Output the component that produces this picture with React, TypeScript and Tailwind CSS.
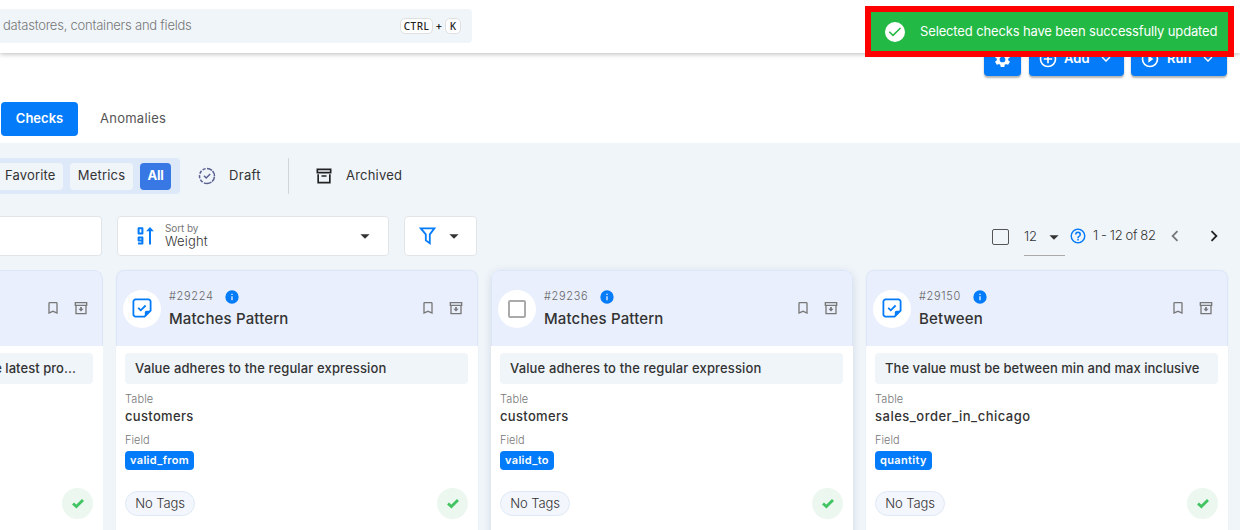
import type { ReactNode } from "react";

type IconProps = { d: string; className?: string };

function Icon({ d, className = "size-6" }: IconProps) {
  return (
    <svg viewBox="0 0 24 24" fill="currentColor" className={`shrink-0 ${className}`}>
      <path d={d} />
    </svg>
  );
}

const BOOKMARK = "M17 18L12 15.82L7 18V5H17M17 3H7A2 2 0 0 0 5 5V21L12 18L19 21V5C19 3.89 18.1 3 17 3Z";
const ARCHIVE =
  "M20 21H4V10H6V19H18V10H20V21M3 3H21V9H3V3M9.5 11H14.5C14.78 11 15 11.22 15 11.5V13H9V11.5C9 11.22 9.22 11 9.5 11M5 5V7H19V5H5Z";
const ARCHIVE_DOWN = "M20.5 21.5H3.5V9H5.5V19.5H18.5V9H20.5V21.5M2.5 3H21.5V9H2.5V3M4.5 5V7H19.5V5H4.5ZM10.7 10.5V13H8L12 17.4L16 13H13.3V10.5Z";
const MENU_DOWN = "M7 10L12 15L17 10H7Z";
const CHEVRON_DOWN = "M7.41 8.58L12 13.17L16.59 8.58L18 10L12 16L6 10L7.41 8.58Z";
const CHEVRON_LEFT = "M15.41 16.58L10.83 12L15.41 7.41L14 6L8 12L14 18L15.41 16.58Z";
const CHEVRON_RIGHT = "M8.59 16.58L13.17 12L8.59 7.41L10 6L16 12L10 18L8.59 16.58Z";
const COG =
  "M19.14 12.94c.04-.3.06-.61.06-.94 0-.32-.02-.64-.07-.94l2.03-1.58a.49.49 0 0 0 .12-.61l-1.92-3.32a.488.488 0 0 0-.59-.22l-2.39.96c-.5-.38-1.03-.7-1.62-.94l-.36-2.54a.484.484 0 0 0-.48-.41h-3.84c-.24 0-.43.17-.47.41l-.36 2.54c-.59.24-1.13.57-1.62.94l-2.39-.96c-.22-.08-.47 0-.59.22L2.74 8.87c-.12.21-.08.47.12.61l2.03 1.58c-.05.3-.09.63-.09.94s.02.64.07.94l-2.03 1.58a.49.49 0 0 0-.12.61l1.92 3.32c.12.22.37.29.59.22l2.39-.96c.5.38 1.03.7 1.62.94l.36 2.54c.05.24.24.41.48.41h3.84c.24 0 .44-.17.47-.41l.36-2.54c.59-.24 1.13-.56 1.62-.94l2.39.96c.22.08.47 0 .59-.22l1.92-3.32c.12-.22.07-.47-.12-.61l-2.01-1.58zM12 15.6A3.6 3.6 0 1 1 12 8.4a3.6 3.6 0 0 1 0 7.2z";
const INFO = "M13 9H11V7H13M13 17H11V11H13M12 2A10 10 0 1 0 12 22A10 10 0 0 0 12 2Z";
const PLUS_CIRCLE =
  "M12 20C7.59 20 4 16.41 4 12S7.59 4 12 4 20 7.59 20 12 16.41 20 12 20M12 2A10 10 0 1 0 12 22A10 10 0 0 0 12 2M13 7H11V11H7V13H11V17H13V13H17V11H13V7Z";
const PLAY_CIRCLE =
  "M12 20C7.59 20 4 16.41 4 12S7.59 4 12 4 20 7.59 20 12 16.41 20 12 20M12 2A10 10 0 1 0 12 22A10 10 0 0 0 12 2M10 16.5L16 12L10 7.5V16.5Z";
const HELP =
  "M11 18H13V16H11V18M12 2A10 10 0 1 0 12 22A10 10 0 0 0 12 2M12 20C7.59 20 4 16.41 4 12S7.59 4 12 4 20 7.59 20 12 16.41 20 12 20M12 6A4 4 0 0 0 8 10H10A2 2 0 0 1 14 10C14 12 11 11.75 11 15H13C13 12.75 16 12.5 16 10A4 4 0 0 0 12 6Z";

function Header() {
  return (
    <header className="relative z-10 flex h-[53px] shrink-0 bg-white shadow-[0_1px_5px_rgba(0,0,0,0.28)]">
      <div className="mt-[9px] flex h-[34px] w-[472px] items-center rounded-r bg-[#f0f5fa] pr-[11px]">
        <span className="ml-[3px] flex-1 text-[13px] font-light tracking-[-0.23px] whitespace-nowrap text-[#777]">
          datastores, containers and fields
        </span>
        <span className="flex h-4 w-[33px] items-center justify-center rounded-[5px] border border-[#e0e0e0] bg-white font-['Noto_Sans',sans-serif] text-[10px] font-medium tracking-[0.5px] text-[#222]">
          CTRL
        </span>
        <span className="w-3 text-center text-[11px]">+</span>
        <span className="flex h-4 w-4 items-center justify-center rounded-[5px] border border-[#e0e0e0] bg-white font-['Noto_Sans',sans-serif] text-[10px] font-medium text-[#222]">
          K
        </span>
      </div>
    </header>
  );
}

function Actions() {
  const button = "flex h-9 items-center rounded bg-[#047bf8] pt-0.5 text-[13px] font-semibold text-white shadow-[0_2px_2px_rgba(0,0,0,0.3)]";
  return (
    <div className="flex justify-end gap-2 pr-[13px]">
      <div className={`${button} w-[37px] justify-center`}>
        <Icon d={COG} className="size-[19px]" />
      </div>
      <div className={`${button} w-[95px] pl-[9px]`}>
        <Icon d={PLUS_CIRCLE} className="size-5" />
        <span className="ml-[6px] w-[27px] tracking-[0.1px]">Add</span>
        <Icon d={CHEVRON_DOWN} className="ml-[6px] size-[18px]" />
      </div>
      <div className={`${button} -ml-px w-24 pl-[9px]`}>
        <Icon d={PLAY_CIRCLE} className="size-5" />
        <span className="ml-[7px] w-[27px]">Run</span>
        <Icon d={CHEVRON_DOWN} className="ml-[5px] size-[18px]" />
      </div>
    </div>
  );
}

function Filters() {
  return (
    <div className="flex h-9 items-center text-[13px] text-[#333]">
      <div className="flex h-9 w-[180px] shrink-0 items-center rounded-r bg-[#dde8f8]">
        <span className="flex h-[27px] w-[63px] items-center rounded-r bg-[#f0f5fa] pl-[5px] tracking-[0.15px]">Favorite</span>
        <span className="ml-[7px] flex h-[27px] w-[63px] items-center justify-center rounded bg-[#f0f5fa] tracking-[0.2px]">Metrics</span>
        <span className="ml-[7px] flex h-[27px] w-[31px] items-center justify-center rounded bg-[#3778e4] font-bold tracking-[-0.3px] text-white">All</span>
      </div>
      <svg viewBox="0 0 18 18" fill="none" stroke="#5b6090" strokeWidth="1.5" className="ml-[18px] size-[18px]">
        <path d="M9 1.5A7.5 7.5 0 0 1 9 16.5" strokeDasharray="5.4 0.8" />
        <path d="M9 16.5A7.5 7.5 0 0 1 9 1.5" strokeDasharray="3.2 1.5" />
        <path d="M6 8.8L8.2 11L12.2 7" />
      </svg>
      <span className="ml-[13px] w-[59px] tracking-[0.3px]">Draft</span>
      <span className="h-9 w-px bg-[#d0d5da]" />
      <Icon d={ARCHIVE} className="ml-[25px] size-5 text-[#222]" />
      <span className="ml-3 tracking-[0.2px]">Archived</span>
    </div>
  );
}

function Toolbar() {
  const field = "flex h-10 items-center border border-[#e1e5e8] bg-white";
  return (
    <div className="mt-[22px] flex h-10 items-center text-[#333]">
      <div className={`${field} w-[102px] rounded-r border-l-0`} />
      <div className={`${field} ml-[15px] w-[272px] rounded pr-[12px] pl-[19px]`}>
        <svg viewBox="0 0 17 18" fill="none" stroke="#047bf8" className="h-[18px] w-[17px]">
          <path d="M1.6 1.2H5.4V6.6H1.6Z" strokeWidth="2" strokeLinejoin="round" />
          <path d="M5.4 13.4H1.6V10.4H5.4V16.6H1" strokeWidth="2" strokeLinejoin="round" />
          <path d="M13 17.5V2" strokeWidth="2" />
          <path d="M9.2 4.2L13 0L16.8 4.2Z" fill="#047bf8" stroke="none" />
        </svg>
        <div className="ml-[11px] flex flex-1 flex-col">
          <span className="text-[10px] leading-[11px] tracking-[-0.1px] text-[#777]">Sort by</span>
          <span className="text-[13px] leading-[15px] font-light tracking-[0.15px]">Weight</span>
        </div>
        <Icon d={MENU_DOWN} className="size-[22px]" />
      </div>
      <div className={`${field} ml-[15px] w-[73px] rounded pl-[14px]`}>
        <svg viewBox="0 0 18 18" fill="none" stroke="#047bf8" strokeWidth="1.8" className="size-[18px]">
          <path d="M1.8 1.4H15.4L10.8 7.4V16.2L6.8 13.4V7.4Z" />
        </svg>
        <Icon d={MENU_DOWN} className="ml-[6px] size-[22px]" />
      </div>
      <div className="ml-auto flex h-10 items-center pr-[15px]">
        <span className="mt-0.5 h-4 w-[17px] rounded-[2px] border border-[#555]" />
        <div className="mt-[2px] ml-[15px] flex h-[37px] w-[41px] items-center border-b border-[#aaa]">
          <span className="flex-1 text-[13px] font-light">12</span>
          <Icon d={MENU_DOWN} className="size-[22px]" />
        </div>
        <Icon d={HELP} className="ml-1 size-[18px] text-[#047bf8]" />
        <span className="ml-[6px] w-[65px] text-[13px] font-light tracking-[-0.36px] whitespace-nowrap">1 - 12 of 82</span>
        <Icon d={CHEVRON_LEFT} className="ml-[6px] size-[22px] text-[#777]" />
        <Icon d={CHEVRON_RIGHT} className="ml-[17px] size-[22px] text-[#222]" />
      </div>
    </div>
  );
}

function SelectMark({ checked }: { checked: boolean }) {
  return (
    <span className="flex size-[38px] shrink-0 items-center justify-center rounded-full bg-white">
      {checked ? (
        <svg viewBox="0 0 20 20" fill="none" stroke="#047bf8" strokeWidth="1.8" className="mb-0.5 size-5">
          <path d="M3.6 1.4H16.4A2.2 2.2 0 0 1 18.6 3.6V12.6L12.6 18.6H3.6A2.2 2.2 0 0 1 1.4 16.4V3.6A2.2 2.2 0 0 1 3.6 1.4Z" />
          <path d="M18.8 12.8H14.6A1.8 1.8 0 0 0 12.8 14.6V18.8Z" fill="#047bf8" stroke="none" />
          <path d="M6.2 9.8L8.8 12.3L13.6 7.5" />
        </svg>
      ) : (
        <span className="size-[18px] rounded-[2px] border-2 border-[#aaa]" />
      )}
    </span>
  );
}

type Check = {
  id: string;
  title: ReactNode;
  description: string;
  descriptionClass: string;
  table: string;
  tableClass: string;
  field: string;
  checked: boolean;
  raised?: boolean;
};

const CHECKS: Check[] = [
  {
    id: "#29224",
    title: "Matches Pattern",
    description: "Value adheres to the regular expression",
    descriptionClass: "tracking-[0.13px]",
    table: "customers",
    tableClass: "tracking-[0.32px]",
    field: "valid_from",
    checked: true,
  },
  {
    id: "#29236",
    title: "Matches Pattern",
    description: "Value adheres to the regular expression",
    descriptionClass: "tracking-[0.13px]",
    table: "customers",
    tableClass: "tracking-[0.32px]",
    field: "valid_to",
    checked: false,
    raised: true,
  },
  {
    id: "#29150",
    title: "Between",
    description: "The value must be between min and max inclusive",
    descriptionClass: "tracking-[0.04px]",
    table: "sales_order_in_chicago",
    tableClass: "tracking-[0.5px]",
    field: "quantity",
    checked: true,
  },
];

function CardActions() {
  return (
    <span className="mb-0.5 ml-auto flex items-center gap-3 text-[#777]">
      <Icon d={BOOKMARK} className="size-4" />
      <Icon d={ARCHIVE_DOWN} className="size-4" />
    </span>
  );
}

function Passed() {
  return (
    <span className="flex size-[31px] items-center justify-center rounded-full bg-[#ebf7ef]">
      <svg viewBox="0 0 12 11" fill="none" stroke="#43c463" strokeWidth="2.8" className="h-[11px] w-3">
        <path d="M1 5.4L4.4 8.6L11 2" />
      </svg>
    </span>
  );
}

function CheckCard({ check }: { check: Check }) {
  return (
    <article
      className={`flex h-[280px] w-[362px] shrink-0 flex-col overflow-hidden rounded-t-lg bg-white ${
        check.raised ? "shadow-[0_2px_8px_rgba(60,80,110,0.16)]" : "shadow-[0_0_1px_rgba(120,150,190,0.3)]"
      }`}
    >
      <div className="flex h-19 shrink-0 items-center rounded-t-lg border border-b-0 border-[#dbe6f6] bg-[#e9effc] pr-[13px] pl-[6px]">
        <SelectMark checked={check.checked} />
        <div className="ml-[8px] flex flex-col">
          <div className="flex h-5 items-center">
            <span className="mr-[11px] text-[11px] font-light tracking-[0.65px] text-[#666]">{check.id}</span>
            <Icon d={INFO} className="size-4 text-[#047bf8]" />
          </div>
          <span className="text-[15px] leading-6 font-medium tracking-[0.15px] text-[#333]">{check.title}</span>
        </div>
        <CardActions />
      </div>
      <div className="flex flex-col items-start px-[9px] pt-[7px]">
        <p
          className={`flex h-[31px] w-[343px] items-center rounded bg-[#f0f5fa] pl-[10px] text-[13px] font-medium whitespace-nowrap text-[#333] ${check.descriptionClass}`}
        >
          {check.description}
        </p>
        <span className="mt-[7px] text-[11px] leading-4 font-light tracking-[0.1px] text-[#777]">Table</span>
        <span className={`text-[13px] leading-[18px] font-medium text-[#333] ${check.tableClass}`}>{check.table}</span>
        <span className="mt-[7px] text-[11px] leading-4 font-light text-[#777]">Field</span>
        <span className="mt-[3px] flex h-[19px] items-center rounded bg-[#047bf8] px-[5px] text-[11px] font-semibold tracking-[0.35px] text-white">
          {check.field}
        </span>
        <div className="mt-[18px] flex h-[31px] w-[343px] items-center justify-between">
          <span className="flex h-[25px] w-[70px] items-center justify-center rounded-full border border-[#dfe9f5] bg-[#f3f6fc] text-[13px] font-light tracking-[-0.1px] text-[#333]">
            No Tags
          </span>
          <Passed />
        </div>
      </div>
    </article>
  );
}

function CardList() {
  return (
    <div className="mt-[14px] flex gap-[13px]">
      <article className="h-[280px] w-[103px] shrink-0 overflow-hidden rounded-tr-lg bg-white">
        <div className="flex h-19 items-center rounded-tr-lg border border-b-0 border-l-0 border-[#dbe6f6] bg-[#e9effc] pr-[13px]">
          <CardActions />
        </div>
        <p className="mt-[7px] flex h-[31px] w-[93px] items-center justify-end rounded-r bg-[#f0f5fa] pr-[17px] text-[13px] font-medium tracking-[0.05px] whitespace-nowrap text-[#333]">
          e latest pro...
        </p>
        <div className="mt-[104px] flex justify-end pr-[10px]">
          <Passed />
        </div>
      </article>
      {CHECKS.map((check) => (
        <CheckCard key={check.id} check={check} />
      ))}
    </div>
  );
}

function Toast() {
  return (
    <div className="absolute top-[6px] left-[865px] z-20 flex h-[51px] w-[369px] items-center border-6 border-[#ff0000] bg-[#22b945] pl-[14px]">
      <svg viewBox="0 0 20 20" className="size-5">
        <circle cx="10" cy="10" r="10" fill="#fff" />
        <path d="M4.3 9.8L8 13.4L15.5 6" fill="none" stroke="#22b945" strokeWidth="1.5" />
      </svg>
      <span className="ml-[15px] text-[13px] tracking-[-0.14px] whitespace-nowrap text-white">Selected checks have been successfully updated</span>
    </div>
  );
}

export default function App() {
  return (
    <div className="relative flex h-[530px] w-[1240px] flex-col overflow-hidden bg-[#f0f5fa] font-['Inter',sans-serif]">
      <Header />
      <section className="-mt-[13px] h-[103px] shrink-0 bg-white">
        <Actions />
        <nav className="mt-[26px] ml-px flex h-[34px] items-center text-[13px]">
          <span className="flex h-[34px] w-[77px] items-center justify-center rounded bg-[#047bf8] font-semibold text-white">Checks</span>
          <span className="ml-[22px] tracking-[0.25px] text-[#555]">Anomalies</span>
        </nav>
      </section>
      <main className="pt-[15px]">
        <Filters />
        <Toolbar />
        <CardList />
      </main>
      <Toast />
    </div>
  );
}
